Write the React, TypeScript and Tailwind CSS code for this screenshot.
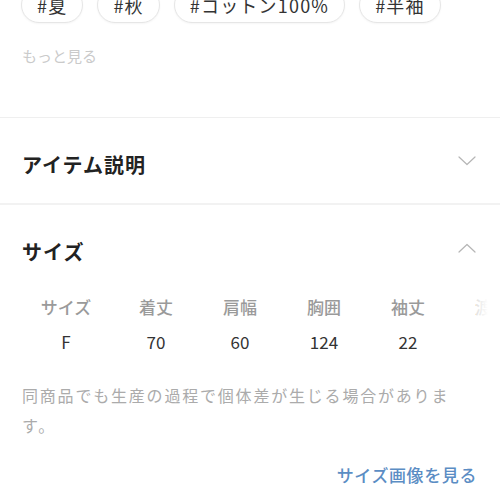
import React from "react";

const tags = ["#夏", "#秋", "#コットン100%", "#半袖"];

const headers = ["サイズ", "着丈", "肩幅", "胸囲", "袖丈", "渡り"];
const values = ["F", "70", "60", "124", "22", ""];

const font = { fontFamily: '"Noto Sans CJK JP", "Noto Sans", sans-serif' };

const Chevron = ({ up = false }: { up?: boolean }) => (
  <svg width="18" height="10" viewBox="0 0 18 10" fill="none" className="text-[#b5b5b5]">
    <path
      d={up ? "M1 9L9 1.5L17 9" : "M1 1L9 8.5L17 1"}
      stroke="currentColor"
      strokeWidth="1.2"
      strokeLinecap="round"
      strokeLinejoin="round"
    />
  </svg>
);

const SectionHeader = ({ title, open }: { title: string; open?: boolean }) => (
  <div className="flex h-[85px] items-center justify-between pl-[22px] pr-[24px]">
    <h2 className="pt-[9px] text-[20px] font-bold tracking-[1px] text-[#222]">{title}</h2>
    <Chevron up={open} />
  </div>
);

export default function App() {
  return (
    <div className="h-[500px] w-[500px] overflow-hidden bg-white" style={font}>
      {/* Tags */}
      <div className="-mt-[13px] flex gap-[14px] pl-[21px]">
        {tags.map((t) => (
          <span
            key={t}
            className="flex h-[36px] items-center rounded-[18px] border border-[#e6e6e6] bg-white px-[15px] text-[18px] tracking-[1.2px] text-[#333] shadow-[0_1px_2px_rgba(0,0,0,0.04)]"
          >
            {t}
          </span>
        ))}
      </div>

      <div className="pl-[22px] pt-[23px] text-[15px] leading-[20px] text-[#cacaca]">もっと見る</div>

      <div className="mt-[51px] h-px bg-[#efefef]" />
      <SectionHeader title="アイテム説明" />
      <div className="h-[2px] bg-[#f2f2f2]" />
      <SectionHeader title="サイズ" open />

      {/* Size table */}
      <div className="relative mt-[6px] overflow-hidden pl-[24px]">
        <div className="flex flex-col gap-[13px]">
          <div className="flex">
            {headers.map((h, i) => (
              <div
                key={h}
                className={`w-[84px] shrink-0 text-center text-[17px] font-medium leading-[22px] text-[#9a9a9a] ${i === 0 ? "mr-[6px]" : ""}`}
              >
                {h}
              </div>
            ))}
          </div>
          <div className="flex">
            {values.map((v, i) => (
              <div
                key={i}
                className={`w-[84px] shrink-0 text-center text-[17px] leading-[22px] text-[#333] ${i === 0 ? "mr-[6px]" : ""}`}
              >
                {v}
              </div>
            ))}
          </div>
        </div>
        <div className="absolute right-0 top-0 h-full w-[24px] bg-gradient-to-r from-white/70 via-white to-white" />
      </div>

      <p className="mt-[27px] w-[450px] pl-[22px] text-[16px] leading-[30px] tracking-[1.8px] text-[#ababab]">
        同商品でも生産の過程で個体差が生じる場合があります。
      </p>

      <div className="flex justify-end pr-[23px] pt-[22px]">
        <span className="text-[17px] font-medium tracking-[0.6px] text-[#5b8dc4]">サイズ画像を見る</span>
      </div>
    </div>
  );
}
